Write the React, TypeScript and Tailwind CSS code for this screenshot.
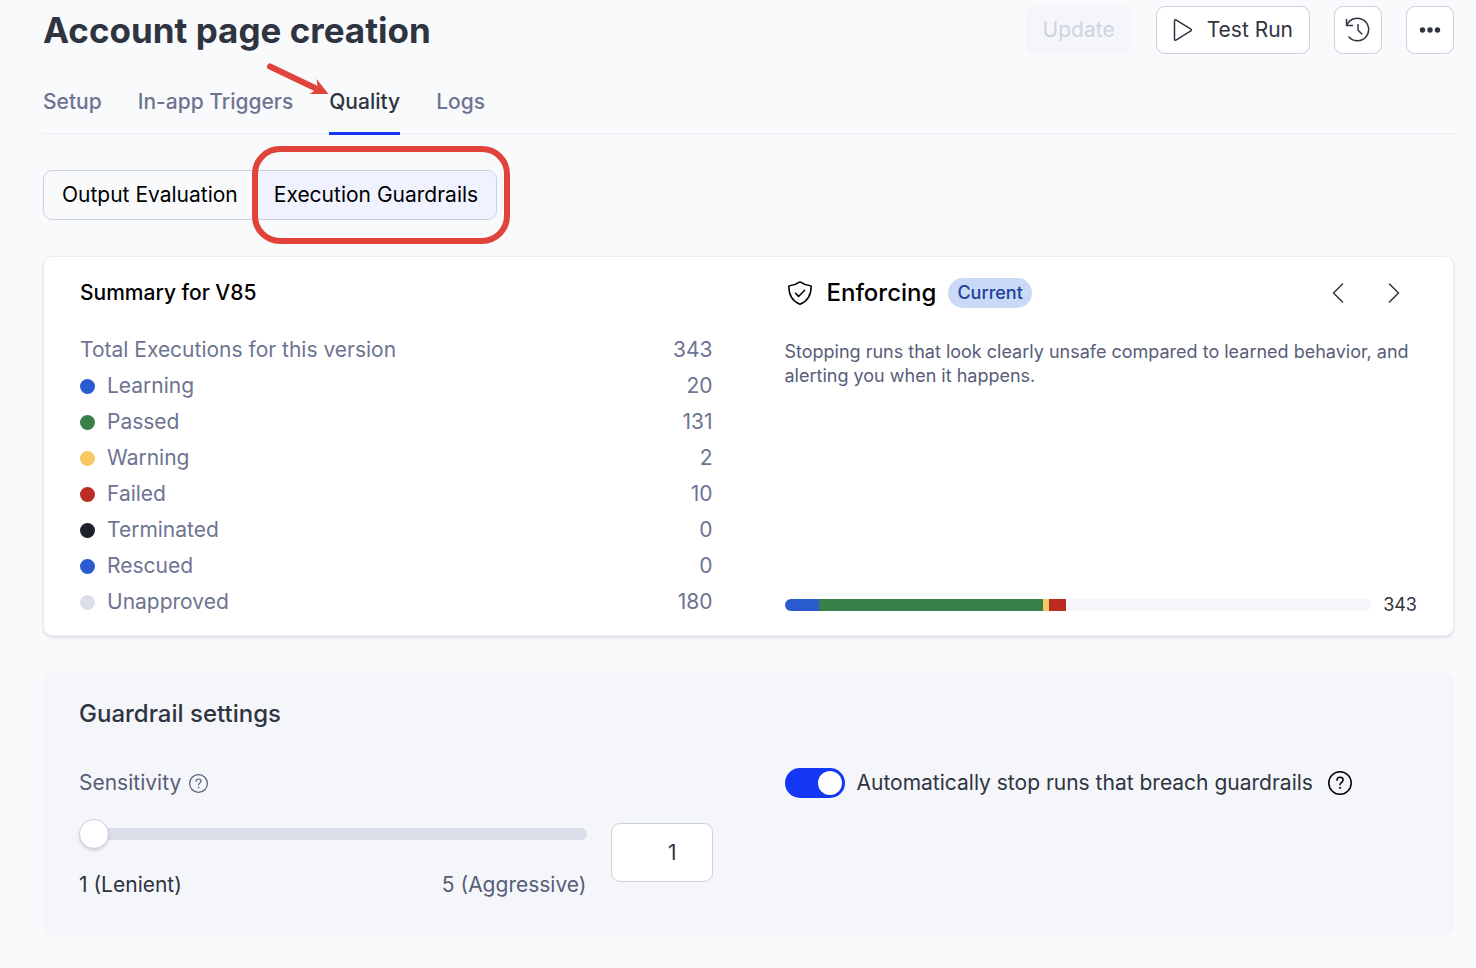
import { useState } from "react";

type Stat = { label: string; value: number; dot: string };

const stats: Stat[] = [
  { label: "Learning", value: 20, dot: "bg-[#2a5ccf]" },
  { label: "Passed", value: 131, dot: "bg-[#38804b]" },
  { label: "Warning", value: 2, dot: "bg-[#f7c963]" },
  { label: "Failed", value: 10, dot: "bg-[#bb2d24]" },
  { label: "Terminated", value: 0, dot: "bg-[#1d212b]" },
  { label: "Rescued", value: 0, dot: "bg-[#2a5ccf]" },
  { label: "Unapproved", value: 180, dot: "bg-[#dadee9]" },
];

const total = stats.reduce((sum, s) => sum + s.value, 0);
const tabs = ["Setup", "In-app Triggers", "Quality", "Logs"];

function PlayIcon() {
  return (
    <svg width="20" height="24" viewBox="0 0 20 24" fill="none" stroke="currentColor" strokeWidth="1.5" strokeLinejoin="round" aria-hidden="true">
      <path d="M1.5 2.700v18.600c0 .8.7 1.200 1.400.8l15-9.200c.8-.5.8-1.300 0-1.800L2.900 1.900c-.7-.4-1.400 0-1.400.8z" />
    </svg>
  );
}

function HistoryIcon() {
  return (
    <svg width="26" height="26" viewBox="0 0 26 26" fill="none" stroke="currentColor" strokeWidth="1.5" strokeLinecap="round" strokeLinejoin="round" aria-hidden="true">
      <path d="M1.500 2.500v6h6" />
      <path d="M1.900 8.200A11.300 11.300 0 1 1 3.900 20" />
      <path d="M13 7.500V13l3.800 4" />
    </svg>
  );
}

function ShieldIcon() {
  return (
    <svg width="24" height="24" viewBox="0 0 24 24" fill="none" stroke="currentColor" strokeWidth="1.500" strokeLinecap="round" strokeLinejoin="round" aria-hidden="true">
      <path d="M12 .9c3 2.100 6.500 3.300 10.500 3.800.5 0 .7.300.7.800-.1 8-2.800 14.500-11.200 17.700C3.600 20 .9 13.500.8 5.500c0-.5.2-.8.7-.8C5.500 4.200 9 3 12 .9z" />
      <path d="M7.500 12.300l3.100 3.100 6-6.200" />
    </svg>
  );
}

function HelpIcon({ className }: { className: string }) {
  return (
    <svg className={className} viewBox="0 0 24 24" fill="none" stroke="currentColor" strokeWidth="1.500" strokeLinecap="round" strokeLinejoin="round" aria-hidden="true">
      <circle cx="12" cy="12" r="11.200" />
      <path d="M9 9.200c.1-1.800 1.400-2.900 3.100-2.900 1.700 0 3 1.100 3 2.700 0 2.300-3.100 2.400-3.100 4.700" />
      <circle cx="12" cy="16.900" r=".6" fill="currentColor" strokeWidth=".8" />
    </svg>
  );
}

function Chevron({ d }: { d: string }) {
  return (
    <svg width="12" height="20" viewBox="0 0 12 20" fill="none" stroke="currentColor" strokeWidth="1.500" strokeLinecap="round" strokeLinejoin="round" aria-hidden="true">
      <path d={d} />
    </svg>
  );
}

function Header() {
  return (
    <header className="flex h-12 items-center justify-between">
      <h1 className="text-[35px] font-bold text-[#2f3441]">Account page creation</h1>
      <div className="flex items-center gap-6">
        <button disabled className="h-12 rounded-[9px] bg-[#f5f6fa] px-[17px] text-[#cfd3e1]">
          Update
        </button>
        <button className="flex h-12 items-center gap-[14px] rounded-[9px] border border-[#cbcfde] bg-white px-4">
          <PlayIcon />
          Test Run
        </button>
        <button aria-label="History" className="flex size-12 items-center justify-center rounded-[9px] border border-[#cbcfde] bg-white">
          <HistoryIcon />
        </button>
        <button aria-label="More options" className="flex size-12 items-center justify-center rounded-[9px] border border-[#cbcfde] bg-white">
          <svg width="22" height="6" viewBox="0 0 22 6" fill="currentColor" aria-hidden="true">
            <circle cx="3.500" cy="3" r="2.700" />
            <circle cx="11" cy="3" r="2.700" />
            <circle cx="18.500" cy="3" r="2.700" />
          </svg>
        </button>
      </div>
    </header>
  );
}

function Tabs() {
  return (
    <nav className="mt-5 flex gap-9 border-b border-[#e9ebf0] pt-3 font-[450]">
      {tabs.map((tab) =>
        tab === "Quality" ? (
          <a key={tab} href="#quality" aria-current="page" className="relative pb-[15px] leading-8 after:absolute after:inset-x-0 after:-bottom-[2px] after:h-[3px] after:bg-[#1436f5]">
            {tab}
            <svg className="absolute -top-6 -left-16" width="64" height="36" viewBox="0 0 64 36" aria-hidden="true">
              <path d="M5 4.500L50 26" stroke="#df4339" strokeWidth="6" strokeLinecap="round" />
              <path d="M63.500 32L51.500 17l1 6.500-2.500 5-5.500 3.500z" fill="#df4339" />
            </svg>
          </a>
        ) : (
          <a key={tab} href="#tab" className="pb-[15px] leading-8 text-[#6d7492]">
            {tab}
          </a>
        )
      )}
    </nav>
  );
}

function ViewSwitch() {
  return (
    <div className="mt-9 flex h-[50px] w-fit rounded-[9px] border border-[#cbcfde] text-black">
      <button className="px-[18px]">Output Evaluation</button>
      <button className="relative rounded-r-[8px] bg-[#f0f2ff] px-[18px]">
        Execution Guardrails
        <span className="absolute -inset-y-[25px] -right-[14px] -left-1 rounded-[28px] border-6 border-[#df4339]" />
      </button>
    </div>
  );
}

function Summary() {
  return (
    <section className="mt-9 grid grid-cols-2 gap-[72px] rounded-[9px] border border-[#eaecf1] bg-white px-9 pt-[21px] pb-[15px] shadow-[0_2px_3px_rgba(30,35,60,0.12)]">
      <div>
        <h2 className="leading-[30px] font-medium text-black">Summary for V85</h2>
        <dl className="mt-6 leading-9 text-[#6d7492]">
          <div className="flex justify-between">
            <dt>Total Executions for this version</dt>
            <dd>{total}</dd>
          </div>
          {stats.map((s) => (
            <div key={s.label} className="flex justify-between">
              <dt className="flex items-center gap-3">
                <span className={`size-[15px] rounded-full ${s.dot}`} />
                {s.label}
              </dt>
              <dd>{s.value}</dd>
            </div>
          ))}
        </dl>
      </div>
      <div className="flex flex-col">
        <div className="flex h-[30px] items-center text-black">
          <span className="ml-[3px]">
            <ShieldIcon />
          </span>
          <h2 className="ml-[15px] text-2xl font-medium">Enforcing</h2>
          <span className="ml-3 rounded-full bg-[#cadaf6] px-[9px] text-lg leading-[30px] font-medium text-[#21409c]">Current</span>
          <div className="ml-auto flex gap-[10px] text-[#2f3441]">
            <button aria-label="Previous" className="flex h-[30px] w-[46px] items-center justify-center">
              <Chevron d="M10.500 1L1.500 10l9 9" />
            </button>
            <button aria-label="Next" className="flex h-[30px] w-[46px] items-center justify-center">
              <Chevron d="M1.500 1l9 9-9 9" />
            </button>
          </div>
        </div>
        <p className="mt-8 text-lg leading-6 text-[#575d78]">
          Stopping runs that look clearly unsafe compared to learned behavior, and alerting you when it happens.
        </p>
        <div className="mt-auto flex items-center gap-3">
          <div className="flex h-3 flex-1 overflow-hidden rounded-full bg-[#f5f6fa]">
            {stats.slice(0, 4).map((s) => (
              <div key={s.label} className={`min-w-[6px] ${s.dot}`} style={{ width: `${(s.value / total) * 100}%` }} />
            ))}
          </div>
          <span className="text-lg leading-[30px]">{total}</span>
        </div>
      </div>
    </section>
  );
}

function Settings() {
  const [level, setLevel] = useState(1);
  const [autoStop, setAutoStop] = useState(true);
  return (
    <section className="mt-9 rounded-[9px] bg-[#f5f6fa] px-9 pt-6 pb-9">
      <h2 className="text-2xl leading-9 font-medium">Guardrail settings</h2>
      <div className="mt-9 grid grid-cols-2 gap-[72px] leading-[30px]">
        <div>
          <div className="flex items-center gap-2 text-[#575d78]">
            <label htmlFor="sensitivity">Sensitivity</label>
            <HelpIcon className="size-[19px]" />
          </div>
          <div className="mt-[21px] flex items-start gap-6">
            <div className="min-w-0 flex-1">
              <input
                id="sensitivity"
                type="range"
                min={1}
                max={5}
                value={level}
                onChange={(e) => setLevel(Number(e.target.value))}
                className="block h-[30px] w-full appearance-none bg-transparent [&::-webkit-slider-runnable-track]:h-3 [&::-webkit-slider-runnable-track]:rounded-full [&::-webkit-slider-runnable-track]:bg-[#dadee9] [&::-webkit-slider-thumb]:-mt-[9px] [&::-webkit-slider-thumb]:size-[30px] [&::-webkit-slider-thumb]:appearance-none [&::-webkit-slider-thumb]:rounded-full [&::-webkit-slider-thumb]:border [&::-webkit-slider-thumb]:border-[#cbcfde] [&::-webkit-slider-thumb]:bg-white [&::-webkit-slider-thumb]:shadow-[0_2px_3px_rgba(30,35,60,0.15)]"
              />
              <div className="mt-[21px] flex justify-between">
                <span>1 (Lenient)</span>
                <span className="text-[#575d78]">5 (Aggressive)</span>
              </div>
            </div>
            <input
              type="number"
              aria-label="Sensitivity level"
              min={1}
              max={5}
              value={level}
              onChange={(e) => setLevel(Number(e.target.value))}
              className="mt-1 h-[59px] w-[102px] appearance-none rounded-[9px] border border-[#cbcfde] bg-white pr-[35px] text-right [&::-webkit-inner-spin-button]:appearance-none"
            />
          </div>
        </div>
        <div className="flex h-[30px] items-center">
          <label className="flex items-center gap-3">
            <input
              type="checkbox"
              role="switch"
              checked={autoStop}
              onChange={(e) => setAutoStop(e.target.checked)}
              className="flex h-[30px] w-[60px] appearance-none items-center rounded-full bg-[#cbcfde] px-[3px] before:size-6 before:rounded-full before:bg-white checked:justify-end checked:bg-[#1436f5]"
            />
            Automatically stop runs that breach guardrails
          </label>
          <HelpIcon className="ml-[15px] size-6 text-black" />
        </div>
      </div>
    </section>
  );
}

export default function App() {
  return (
    <main className="min-h-screen bg-[#f9fafc] pt-[6px] pr-[22px] pb-8 pl-[43px] font-['Inter',sans-serif] text-[21px] text-[#2f3441]">
      <Header />
      <Tabs />
      <ViewSwitch />
      <Summary />
      <Settings />
    </main>
  );
}
